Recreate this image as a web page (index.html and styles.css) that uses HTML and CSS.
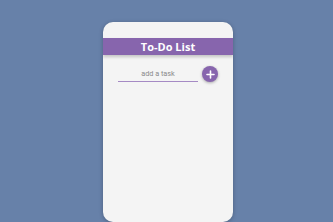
FILE: index.html
```html
<!DOCTYPE html>
<html>
<head>
<meta charset="utf-8">
<link rel="stylesheet" href="styles.css">
</head>
<body>
<div class="card">
  <div class="header">To-Do List</div>
  <div class="row">
    <input class="task" type="text" placeholder="add a task">
    <button class="add"><svg width="9" height="9" viewBox="0 0 9 9"><path d="M4.5 1v7M1 4.5h7" stroke="#fff" stroke-width="1.6" stroke-linecap="round"/></svg></button>
  </div>
</div>
</body>
</html>
```
FILE: styles.css
```css
html, body { margin: 0; padding: 0; }
body {
  width: 333px; height: 222px; overflow: hidden;
  background: #6781a9;
  font-family: "Open Sans", Lato, sans-serif;
}
.card {
  width: 130px; height: 200px;
  margin: 22px 0 0 103px;
  background: #f4f4f4;
  border-radius: 10px;
  box-shadow: 0 1px 4px rgba(0,0,0,0.25);
  overflow: hidden;
  padding-top: 16px;
  box-sizing: border-box;
}
.header {
  height: 17px;
  background: #8765ad;
  color: #fff;
  font-weight: 700;
  font-size: 11px;
  line-height: 17px;
  text-align: center;
  box-shadow: 0 2px 3px rgba(0,0,0,0.2);
}
.row {
  display: flex; align-items: center;
  margin-top: 11px;
  padding-left: 15px;
  gap: 4px;
}
.task {
  width: 80px; height: 14px;
  border: none; border-bottom: 1px solid #a58ac4;
  background: transparent;
  font-family: Roboto, sans-serif; font-size: 7.3px;
  text-align: center; padding: 0;
  outline: none;
}
.task::placeholder { color: #8a8a8a; }
.add {
  width: 16px; height: 16px; border-radius: 50%;
  border: none; padding: 0;
  background: #8765ad;
  display: flex; align-items: center; justify-content: center;
  box-shadow: 0 1px 3px rgba(0,0,0,0.3);
}
```
